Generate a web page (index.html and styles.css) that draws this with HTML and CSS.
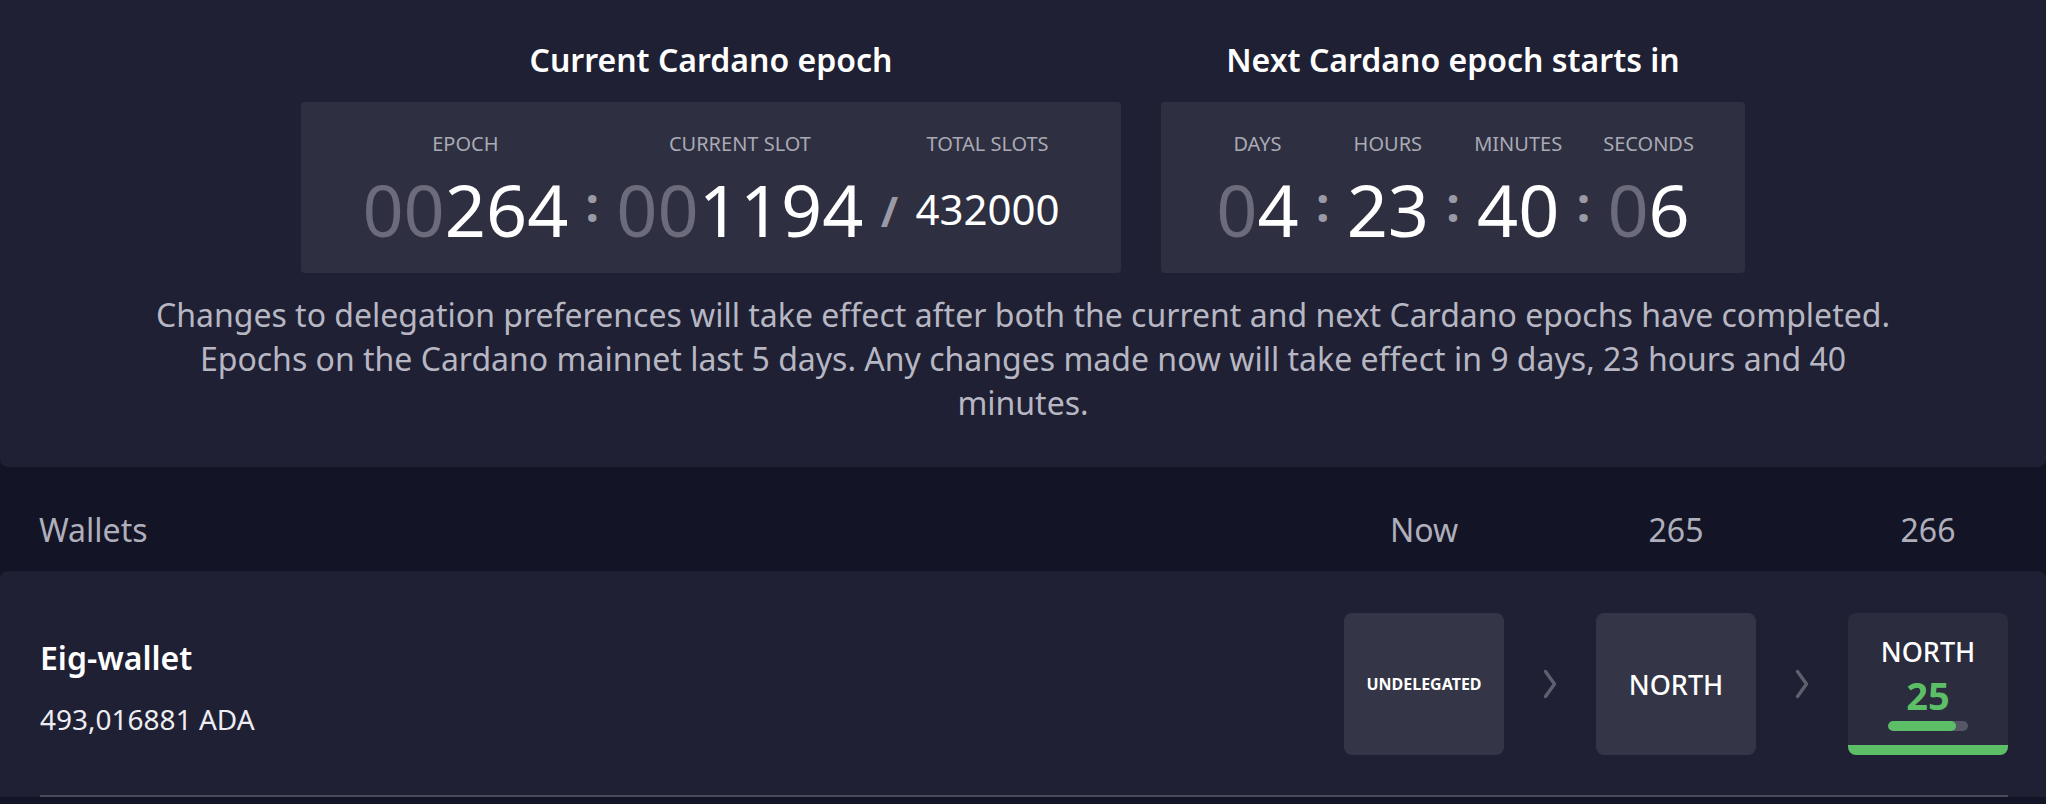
FILE: index.html
```html
<!DOCTYPE html>
<html lang="en">
<head>
<meta charset="utf-8">
<title>Cardano epoch</title>
<link rel="stylesheet" href="styles.css">
</head>
<body>
<div class="top">
  <div class="epochs">
    <section class="epoch-block">
      <h2 class="block-title">Current Cardano epoch</h2>
      <div class="counter counter-left">
        <div class="unit">
          <div class="unit-label"><span>EPOCH</span></div>
          <div class="unit-value"><span class="dim">00</span>264</div>
        </div>
        <div class="sep">:</div>
        <div class="unit">
          <div class="unit-label"><span>CURRENT SLOT</span></div>
          <div class="unit-value"><span class="dim">00</span>1194</div>
        </div>
        <div class="sep sep-slash">/</div>
        <div class="unit">
          <div class="unit-label"><span>TOTAL SLOTS</span></div>
          <div class="unit-value unit-value-small">432000</div>
        </div>
      </div>
    </section>
    <section class="epoch-block">
      <h2 class="block-title">Next Cardano epoch starts in</h2>
      <div class="counter counter-right">
        <div class="unit">
          <div class="unit-label"><span>DAYS</span></div>
          <div class="unit-value"><span class="dim">0</span>4</div>
        </div>
        <div class="sep">:</div>
        <div class="unit">
          <div class="unit-label"><span>HOURS</span></div>
          <div class="unit-value">23</div>
        </div>
        <div class="sep">:</div>
        <div class="unit">
          <div class="unit-label"><span>MINUTES</span></div>
          <div class="unit-value">40</div>
        </div>
        <div class="sep">:</div>
        <div class="unit">
          <div class="unit-label"><span>SECONDS</span></div>
          <div class="unit-value"><span class="dim">0</span>6</div>
        </div>
      </div>
    </section>
  </div>
  <p class="notice">Changes to delegation preferences will take effect after both the current and next Cardano epochs have completed. Epochs on the Cardano mainnet last 5 days. Any changes made now will take effect in 9 days, 23 hours and 40 minutes.</p>
</div>

<div class="wallets-head">
  <div class="head-title">Wallets</div>
  <div class="head-cols">
    <div class="head-col">Now</div>
    <div class="head-col">265</div>
    <div class="head-col">266</div>
  </div>
</div>

<div class="wallet-row">
  <div class="wallet-inner">
    <div class="wallet-info">
      <div class="wallet-name">Eig-wallet</div>
      <div class="wallet-amount">493,016881 ADA</div>
    </div>
    <div class="stages">
      <div class="stage stage-plain"><span class="stage-small">UNDELEGATED</span></div>
      <div class="arrow"><svg width="14" height="30" viewBox="0 0 14 30"><path d="M2.5 2.5 L11.5 15 L2.5 27.5" fill="none" stroke="#5e5f6f" stroke-width="3.4" stroke-linecap="round" stroke-linejoin="round"/></svg></div>
      <div class="stage stage-plain"><span class="stage-name">NORTH</span></div>
      <div class="arrow"><svg width="14" height="30" viewBox="0 0 14 30"><path d="M2.5 2.5 L11.5 15 L2.5 27.5" fill="none" stroke="#5e5f6f" stroke-width="3.4" stroke-linecap="round" stroke-linejoin="round"/></svg></div>
      <div class="stage stage-future">
        <span class="stage-name">NORTH</span>
        <span class="stage-score">25</span>
        <div class="bar"><div class="bar-fill" style="width: 85%"></div></div>
      </div>
    </div>
  </div>
</div>
</body>
</html>
```

FILE: styles.css
```css
* { box-sizing: border-box; }

html, body {
  margin: 0;
  padding: 0;
  background: #131426;
  font-family: "Noto Sans", "Open Sans", sans-serif;
  color: #ffffff;
}

.top {
  background: #1f2033;
  border-radius: 0 0 8px 8px;
  padding: 40px 0 42px;
}

.epochs {
  display: flex;
  justify-content: center;
  gap: 40px;
}

.epoch-block {
  display: flex;
  flex-direction: column;
  align-items: center;
}

.block-title {
  margin: 0 0 22px;
  font-size: 32px;
  line-height: 40px;
  font-weight: 600;
  color: #ffffff;
}

.counter {
  display: flex;
  justify-content: center;
  background: #2e2f40;
  border-radius: 4px;
  padding: 28px 0 28px;
}

.counter-left { width: 820px; }
.counter-right { width: 584px; }

.unit {
  display: flex;
  flex-direction: column;
  align-items: center;
}

.unit-label {
  width: 0;
  display: flex;
  justify-content: center;
  white-space: nowrap;
  font-size: 20px;
  line-height: 28px;
  color: #a9aab5;
  margin-bottom: 15px;
}

.unit-value {
  font-size: 72px;
  line-height: 72px;
  height: 72px;
  display: flex;
  align-items: center;
  color: #ffffff;
  white-space: nowrap;
}

.unit-value-small {
  font-size: 42px;
}

.dim { color: #6b6b7b; }

.sep {
  flex: none;
  width: 48px;
  align-self: flex-end;
  height: 72px;
  display: flex;
  align-items: center;
  justify-content: center;
  padding-bottom: 12px;
  font-size: 48px;
  font-weight: 700;
  color: #9a9aa6;
}

.sep-slash {
  width: 52px;
  font-size: 42px;
  padding-bottom: 0;
  padding-top: 2px;
}

.notice {
  width: 1750px;
  margin: 20px auto 0;
  text-align: center;
  font-size: 32px;
  line-height: 44px;
  color: #b7b7c3;
}

.wallets-head {
  height: 104px;
  display: flex;
  align-items: center;
  padding: 20px 38px 0 39px;
  font-size: 32px;
  color: #afafbb;
}

.head-title { flex: 1; }

.head-cols {
  display: flex;
  gap: 92px;
}

.head-col {
  width: 160px;
  text-align: center;
}

.wallet-row {
  background: #1f2033;
  border-radius: 8px 8px 0 0;
  padding: 0 38px 0 40px;
}

.wallet-inner {
  display: flex;
  align-items: center;
  padding: 42px 0 40px;
  border-bottom: 2px solid #4a4b5b;
}

.wallet-info {
  flex: 1;
  display: flex;
  flex-direction: column;
  padding-top: 5px;
}

.wallet-name {
  font-size: 32px;
  line-height: 42px;
  font-weight: 600;
  color: #ffffff;
  margin-bottom: 22px;
}

.wallet-amount {
  font-size: 28px;
  line-height: 36px;
  color: #ececf2;
}

.stages {
  display: flex;
  align-items: center;
}

.stage {
  width: 160px;
  height: 142px;
  border-radius: 8px;
  display: flex;
  flex-direction: column;
  align-items: center;
  justify-content: center;
}

.stage-plain { background: #343546; }

.stage-small {
  font-size: 16px;
  font-weight: 700;
  color: #ffffff;
}

.stage-name {
  font-size: 27px;
  font-weight: 500;
  color: #ffffff;
}

.stage-future {
  background: #2b2c3d;
  border-bottom: 10px solid #5cbf67;
  justify-content: flex-start;
  padding-top: 23px;
}

.stage-future .stage-name {
  line-height: 32px;
}

.stage-score {
  margin-top: 7px;
  font-size: 38px;
  line-height: 40px;
  font-weight: 700;
  color: #5cbf67;
}

.bar {
  margin-top: 6px;
  width: 80px;
  height: 10px;
  border-radius: 5px;
  background: #555666;
  overflow: hidden;
}

.bar-fill {
  height: 100%;
  background: #5cbf67;
  border-radius: 5px;
}

.arrow {
  width: 92px;
  display: flex;
  justify-content: center;
  align-items: center;
}
```
